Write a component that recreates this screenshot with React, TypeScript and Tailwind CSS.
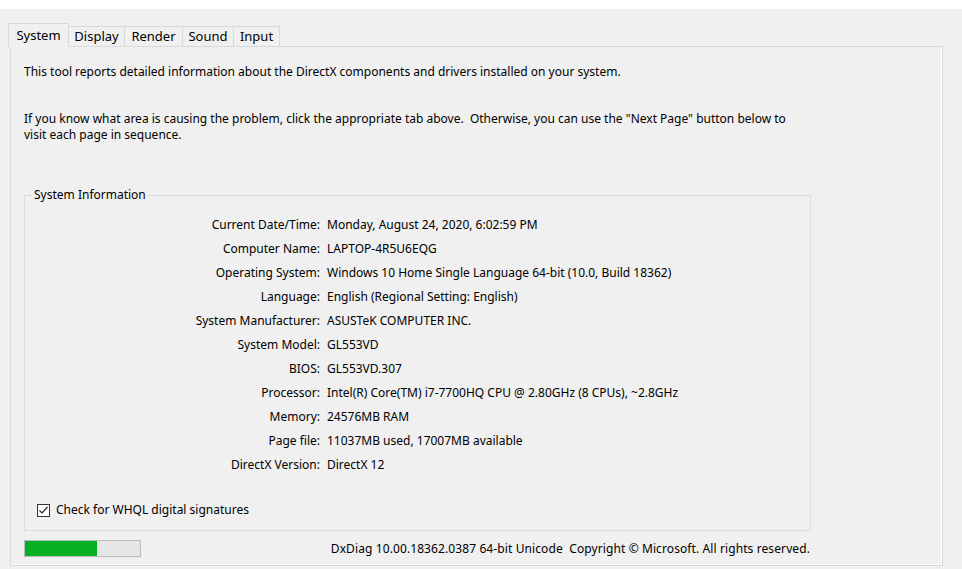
const tabs = ["System", "Display", "Render", "Sound", "Input"];
const tabWidths = ["w-[61px]", "w-[57px]", "w-[59px]", "w-[52px]", "w-[47px]"];

const info: [string, string][] = [
  ["Current Date/Time:", "Monday, August 24, 2020, 6:02:59 PM"],
  ["Computer Name:", "LAPTOP-4R5U6EQG"],
  ["Operating System:", "Windows 10 Home Single Language 64-bit (10.0, Build 18362)"],
  ["Language:", "English (Regional Setting: English)"],
  ["System Manufacturer:", "ASUSTeK COMPUTER INC."],
  ["System Model:", "GL553VD"],
  ["BIOS:", "GL553VD.307"],
  ["Processor:", "Intel(R) Core(TM) i7-7700HQ CPU @ 2.80GHz (8 CPUs), ~2.8GHz"],
  ["Memory:", "24576MB RAM"],
  ["Page file:", "11037MB used, 17007MB available"],
  ["DirectX Version:", "DirectX 12"],
];

export default function App() {
  return (
    <div className="h-[569px] w-[962px] overflow-hidden bg-[#f0f0f0] text-[12px] text-black" style={{ fontFamily: '"Noto Sans", "Open Sans", sans-serif' }}>
      <div className="h-[9px] bg-white" />
      {/* tab strip */}
      <div className="mt-[14px] flex h-[23px] items-end pl-[8px]">
        {tabs.map((tab, i) =>
          i === 0 ? (
            <div key={tab} className={`relative z-10 -mb-px flex h-[24px] ${tabWidths[i]} items-start justify-center border border-b-0 border-[#d9d9d9] bg-[#f0f0f0] pt-[2px] text-[13px]`}>
              {tab}
            </div>
          ) : (
            <div key={tab} className={`-ml-px flex h-[20px] ${tabWidths[i]} items-center justify-center border border-b-0 border-[#d9d9d9] bg-[#f0f0f0] text-[13px]`}>
              {tab}
            </div>
          )
        )}
      </div>
      {/* tab panel */}
      <div className="ml-[10px] h-[520px] w-[933px] border border-[#d9d9d9] shadow-[inset_-1px_-1px_0_#ffffff]">
        <div className="pl-[13px] leading-[16px]">
          <p className="mt-[17px]">This tool reports detailed information about the DirectX components and drivers installed on your system.</p>
          <p className="mt-[31px] w-[785px]">
            If you know what area is causing the problem, click the appropriate tab above.&nbsp; Otherwise, you can use the "Next Page" button below to visit each page in sequence.
          </p>

          <fieldset className="mt-[44px] h-[344px] w-[787px] border border-[#dcdcdc]">
            <legend className="ml-[7px] px-[2px] leading-[16px]">System Information</legend>
            <div className="mt-[10px] grid grid-cols-[295px_1fr] gap-x-[7px] leading-[24px]">
              {info.map(([label, value]) => (
                <div key={label} className="contents">
                  <div className="text-right">{label}</div>
                  <div>{value}</div>
                </div>
              ))}
            </div>
            <label className="mt-[25px] ml-[12px] flex items-center gap-[6px] leading-[16px]">
              <span className="flex h-[13px] w-[13px] items-center justify-center border border-[#333333] bg-white">
                <svg viewBox="0 0 11 11" className="h-[11px] w-[11px]">
                  <path d="M1.5 5.5 L4 8 L9.5 2" fill="none" stroke="#222222" strokeWidth="1.2" />
                </svg>
              </span>
              Check for WHQL digital signatures
            </label>
          </fieldset>

          <div className="mt-[9px] flex w-[787px] items-center justify-between">
            <div className="h-[17px] w-[117px] border border-[#bcbcbc] bg-[#e6e6e6]">
              <div className="h-full w-[72px] bg-[#06b025]" />
            </div>
            <span className="pr-px tracking-[0.1px]">DxDiag 10.00.18362.0387 64-bit Unicode&nbsp; Copyright © Microsoft. All rights reserved.</span>
          </div>
        </div>
      </div>
    </div>
  );
}
